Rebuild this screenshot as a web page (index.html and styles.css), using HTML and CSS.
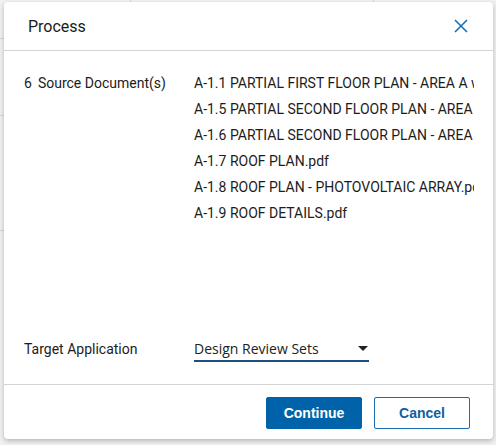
FILE: index.html
```html
<!DOCTYPE html>
<html>
<head>
<meta charset="utf-8">
<link rel="stylesheet" href="styles.css">
</head>
<body>
<div class="backdrop">
  <div class="modal">
    <div class="modal-header">
      <div class="title">Process</div>
      <button class="close" aria-label="Close">
        <svg width="14" height="14" viewBox="0 0 14 14"><path d="M1 1L13 13M13 1L1 13" stroke="#1a6fb5" stroke-width="1.6" fill="none"/></svg>
      </button>
    </div>
    <div class="modal-body">
      <div class="row docs">
        <div class="label"><span class="count">6</span>Source Document(s)</div>
        <ul class="doc-list">
          <li>A-1.1 PARTIAL FIRST FLOOR PLAN - AREA A with notes.pdf</li>
          <li>A-1.5 PARTIAL SECOND FLOOR PLAN - AREA A.pdf</li>
          <li>A-1.6 PARTIAL SECOND FLOOR PLAN - AREA B.pdf</li>
          <li>A-1.7 ROOF PLAN.pdf</li>
          <li>A-1.8 ROOF PLAN - PHOTOVOLTAIC ARRAY.pdf</li>
          <li>A-1.9 ROOF DETAILS.pdf</li>
        </ul>
      </div>
      <div class="row target">
        <div class="label">Target Application</div>
        <div class="select">
          <span class="select-value">Design Review Sets</span>
          <svg class="caret" width="10" height="5" viewBox="0 0 10 5"><path d="M0 0H10L5 5Z" fill="#222"/></svg>
        </div>
      </div>
    </div>
    <div class="modal-footer">
      <button class="btn primary">Continue</button>
      <button class="btn secondary">Cancel</button>
    </div>
  </div>
</div>
</body>
</html>
```

FILE: styles.css
```css
html, body {
  margin: 0;
  padding: 0;
}
body {
  background: #eeeeee;
  font-family: Roboto, "Liberation Sans", Arial, sans-serif;
  color: #1c1c1c;
}
.backdrop {
  width: 496px;
  height: 445px;
  padding: 2px 0 0 4px;
  box-sizing: border-box;
  background:
    linear-gradient(#d6d6d6, #d6d6d6) 0 38px / 4px 1px no-repeat,
    linear-gradient(#d6d6d6, #d6d6d6) 0 115px / 4px 1px no-repeat,
    linear-gradient(#d6d6d6, #d6d6d6) 0 230px / 4px 1px no-repeat,
    linear-gradient(#dadada, #dadada) 130px 0 / 1px 2px no-repeat,
    linear-gradient(#dadada, #dadada) 373px 0 / 1px 2px no-repeat,
    #f1f1f1;
}
.modal {
  width: 489px;
  height: 437px;
  background: #fff;
  border-radius: 4px;
  box-shadow: 0 2px 5px rgba(0,0,0,0.25);
  display: flex;
  flex-direction: column;
}
.modal-header {
  height: 48px;
  border-bottom: 1px solid #d4d4d4;
  display: flex;
  align-items: center;
  justify-content: space-between;
  padding: 0 24px 0 24px;
}
.title {
  font-size: 16px;
  color: #1b1b1b;
  padding-top: 1px;
}
.close {
  border: 0;
  background: none;
  padding: 0;
  width: 14px;
  height: 14px;
  margin-right: 1px;
  display: flex;
}
.modal-body {
  flex: 1;
  display: flex;
  flex-direction: column;
  justify-content: space-between;
  padding: 19px 0 22px 20px;
  font-size: 14px;
}
.row {
  display: flex;
}
.label {
  width: 170px;
  flex: none;
  line-height: 26px;
  color: #1c1c1c;
}
.count {
  margin-right: 6px;
}
.doc-list {
  list-style: none;
  margin: 0;
  padding: 0;
  width: 280px;
  overflow: hidden;
}
.doc-list li {
  line-height: 26px;
  white-space: nowrap;
  color: #1c1c1c;
}
.target {
  align-items: center;
}
.select {
  width: 175px;
  height: 24px;
  border-bottom: 2px solid #1d4f80;
  display: flex;
  align-items: center;
  justify-content: space-between;
  font-family: "Open Sans", "Liberation Sans", sans-serif;
  font-size: 14px;
  color: #222;
  box-sizing: content-box;
}
.caret {
  margin-right: 1px;
}
.modal-footer {
  border-top: 1px solid #d4d4d4;
  padding: 12px 23px 10px 0;
  display: flex;
  justify-content: flex-end;
  gap: 12px;
}
.btn {
  width: 96px;
  height: 32px;
  border-radius: 2px;
  font-family: "Liberation Sans", Arial, sans-serif;
  font-weight: bold;
  font-size: 14px;
  cursor: pointer;
}
.primary {
  background: #0063a9;
  color: #fff;
  border: 1px solid #0063a9;
}
.secondary {
  background: #fff;
  color: #0d5fa3;
  border: 1px solid #1a6cb0;
}
```
